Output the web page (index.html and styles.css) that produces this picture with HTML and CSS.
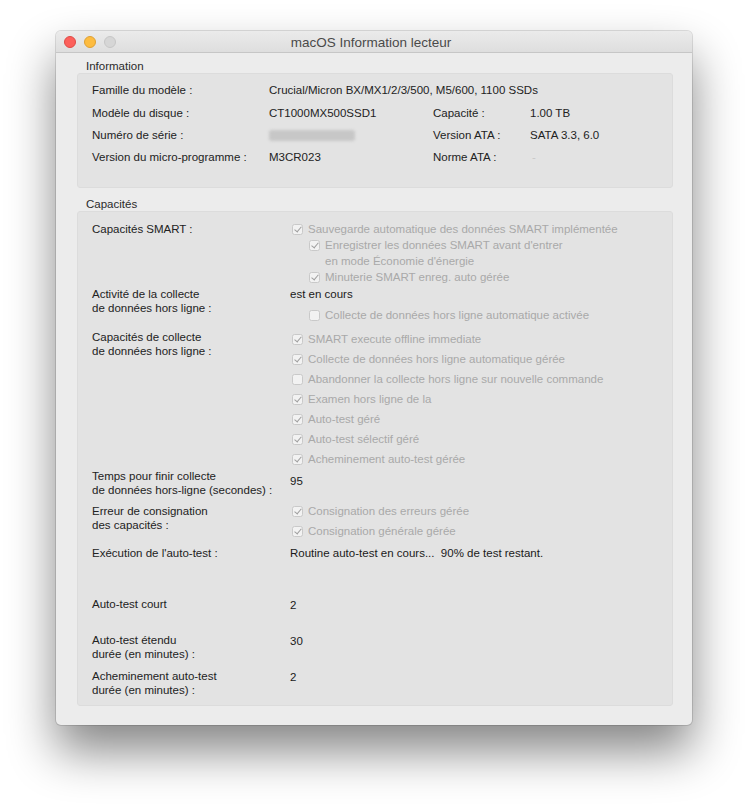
FILE: index.html
```html
<!DOCTYPE html>
<html lang="fr">
<head>
<meta charset="utf-8">
<title>macOS Information lecteur</title>
<link rel="stylesheet" href="styles.css">
</head>
<body>
<div class="window">
  <div class="titlebar">
    <div class="lights">
      <span class="light red"></span>
      <span class="light yellow"></span>
      <span class="light gray"></span>
    </div>
    <div class="title">macOS Information lecteur</div>
    <div></div>
  </div>
  <div class="content">
    <div class="group-label">Information</div>
    <div class="box info">
      <div class="lbl r1">Famille du modèle :</div>
      <div class="val r1 wide">Crucial/Micron BX/MX1/2/3/500, M5/600, 1100 SSDs</div>
      <div class="lbl">Modèle du disque :</div>
      <div class="val">CT1000MX500SSD1</div>
      <div class="lbl">Capacité :</div>
      <div class="val">1.00 TB</div>
      <div class="lbl">Numéro de série :</div>
      <div class="val"><span class="blur"></span></div>
      <div class="lbl">Version ATA :</div>
      <div class="val">SATA 3.3, 6.0</div>
      <div class="lbl">Version du micro-programme :</div>
      <div class="val">M3CR023</div>
      <div class="lbl">Norme ATA :</div>
      <div class="val dash">-</div>
    </div>

    <div class="group-label cap-label">Capacités</div>
    <div class="box caps">
      <div class="crow row-a">
        <div class="clbl l16">Capacités SMART :</div>
        <div class="cval l16">
          <div class="item"><span class="cb on"></span><span>Sauvegarde automatique des données SMART implémentée</span></div>
          <div class="item sub"><span class="cb on"></span><span>Enregistrer les données SMART avant d'entrer<br>en mode Économie d'énergie</span></div>
          <div class="item sub"><span class="cb on"></span><span>Minuterie SMART enreg. auto gérée</span></div>
        </div>
      </div>

      <div class="crow row-b">
        <div class="clbl pt1">Activité de la collecte<br>de données hors ligne :</div>
        <div class="cval l16">
          <div class="plain">est en cours</div>
          <div class="item sub mt5"><span class="cb"></span><span>Collecte de données hors ligne automatique activée</span></div>
        </div>
      </div>

      <div class="crow row-c">
        <div class="clbl pt1">Capacités de collecte<br>de données hors ligne :</div>
        <div class="cval l20">
          <div class="item"><span class="cb on"></span><span>SMART execute offline immediate</span></div>
          <div class="item"><span class="cb on"></span><span>Collecte de données hors ligne automatique gérée</span></div>
          <div class="item"><span class="cb"></span><span>Abandonner la collecte hors ligne sur nouvelle commande</span></div>
          <div class="item"><span class="cb on"></span><span>Examen hors ligne de la</span></div>
          <div class="item"><span class="cb on"></span><span>Auto-test géré</span></div>
          <div class="item"><span class="cb on"></span><span>Auto-test sélectif géré</span></div>
          <div class="item"><span class="cb on"></span><span>Acheminement auto-test gérée</span></div>
        </div>
      </div>

      <div class="crow row-d">
        <div class="clbl">Temps pour finir collecte<br>de données hors-ligne (secondes) :</div>
        <div class="cval plain pt5">95</div>
      </div>

      <div class="crow row-e">
        <div class="clbl pt3">Erreur de consignation<br>des capacités :</div>
        <div class="cval l20">
          <div class="item"><span class="cb on"></span><span>Consignation des erreurs gérée</span></div>
          <div class="item"><span class="cb on"></span><span>Consignation générale gérée</span></div>
        </div>
      </div>

      <div class="crow row-f">
        <div class="clbl">Exécution de l'auto-test :</div>
        <div class="cval plain">Routine auto-test en cours...&nbsp; 90% de test restant.</div>
      </div>

      <div class="crow row-g">
        <div class="clbl">Auto-test court</div>
        <div class="cval plain pt1">2</div>
      </div>

      <div class="crow row-h">
        <div class="clbl">Auto-test étendu<br>durée (en minutes) :</div>
        <div class="cval plain pt1">30</div>
      </div>

      <div class="crow row-i">
        <div class="clbl">Acheminement auto-test<br>durée (en minutes) :</div>
        <div class="cval plain pt1">2</div>
      </div>
    </div>
  </div>
</div>
</body>
</html>
```

FILE: styles.css
```css
html, body {
  margin: 0;
  padding: 0;
  background: #ffffff;
}

body {
  font-family: "Liberation Sans", Arial, sans-serif;
  font-size: 11.5px;
  color: #222222;
  padding-top: 31px;
  padding-left: 56px;
  height: 805px;
  box-sizing: border-box;
  overflow: hidden;
}

.window {
  width: 636px;
  background: #ececec;
  border-radius: 5px;
  box-shadow: 0 26px 48px rgba(0, 0, 0, 0.48), 0 0 0 1px rgba(0, 0, 0, 0.12);
  overflow: hidden;
}

.titlebar {
  height: 21px;
  border-bottom: 1px solid #c6c6c6;
  background: linear-gradient(#ebebeb, #dedede);
  display: grid;
  grid-template-columns: 1fr auto 1fr;
  align-items: center;
}

.lights {
  display: flex;
  gap: 8px;
  padding-left: 8px;
  padding-top: 1px;
}

.light {
  width: 12px;
  height: 12px;
  border-radius: 50%;
  box-sizing: border-box;
}

.red {
  background: #fc605b;
  border: 1px solid #de4a45;
}

.yellow {
  background: #fdbc40;
  border: 1px solid #dea033;
}

.gray {
  background: #d6d6d6;
  border: 1px solid #c6c6c6;
}

.title {
  font-size: 13.5px;
  color: #4a4a4a;
  padding-top: 1px;
  margin-left: -6px;
}

.content {
  padding: 0 19px 19px 21px;
}

.group-label {
  line-height: 14px;
  margin-top: 6px;
  padding-left: 9px;
  color: #2a2a2a;
}

.cap-label {
  margin-top: 9px;
}

.box {
  background: #e3e3e3;
  border: 1px solid #dcdcdc;
  border-radius: 3px;
}

.info {
  padding: 4px 0 19px 14px;
  display: grid;
  grid-template-columns: 177px 164px 97px 1fr;
  grid-template-rows: 24px 22px 22px 22px;
  align-items: center;
}

.info .val.wide {
  grid-column: 2 / 5;
}

.blur {
  display: block;
  width: 86px;
  height: 11px;
  background: #c7c7c7;
  border-radius: 3px;
  filter: blur(1.5px);
}

.dash {
  color: #c8c8c8;
  padding-left: 2px;
}

.caps {
  padding: 9px 0 8px 14px;
}

.crow {
  display: grid;
  grid-template-columns: 198px 1fr;
  line-height: 14px;
}

.clbl {
  color: #222222;
}

.l16 {
  line-height: 16px;
}

.l20 {
  line-height: 20px;
}

.pt1 { padding-top: 1px; }
.pt3 { padding-top: 3px; }
.pt5 { padding-top: 5px; }
.mt5 { margin-top: 5px; }

.row-b { margin-top: 1px; }
.row-c { margin-top: 6px; }
.row-d { margin-top: 0; }
.row-e { margin-top: 4px; }
.row-f { margin-top: 5px; }
.row-g { margin-top: 37px; }
.row-h { margin-top: 21px; }
.row-i { margin-top: 8px; }

.plain {
  color: #1a1a1a;
}

.item {
  display: flex;
  align-items: flex-start;
  color: #a9a9a9;
  padding-left: 2px;
}

.item.sub {
  padding-left: 19px;
}

.cb {
  flex: none;
  width: 11px;
  height: 11px;
  box-sizing: border-box;
  border: 1px solid #c9c9c9;
  border-radius: 2.5px;
  background: #f2f2f2;
  margin-right: 5px;
  margin-top: 2.5px;
  position: relative;
}

.l20 .cb {
  margin-top: 4.5px;
}

.cb.on::after {
  content: "";
  position: absolute;
  left: 3px;
  top: 0.5px;
  width: 3px;
  height: 6px;
  border-right: 1.5px solid #9e9e9e;
  border-bottom: 1.5px solid #9e9e9e;
  transform: rotate(40deg);
}
```
